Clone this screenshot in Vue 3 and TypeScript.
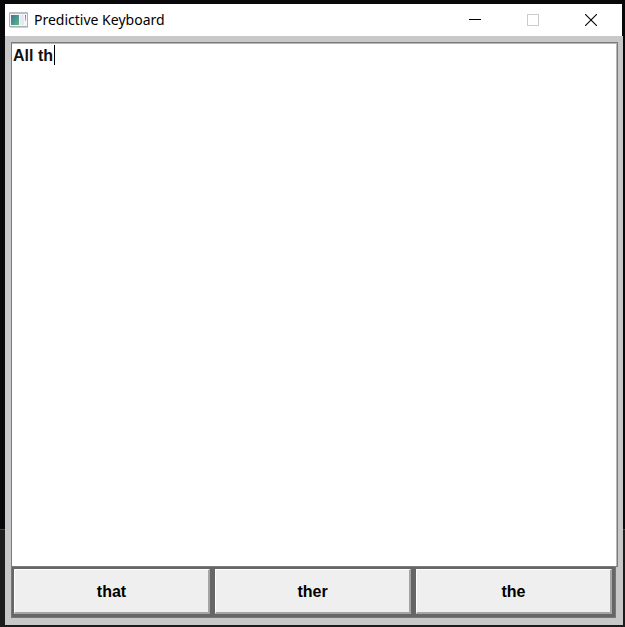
<script setup lang="ts">
import { computed, nextTick, onMounted, ref } from 'vue'

const text = ref('All th')
const editor = ref<HTMLTextAreaElement | null>(null)
const caretLeft = ref(0)
const edited = ref(false)
const suggestions = ref<string[]>(['that', 'ther', 'the'])

const caretStyle = computed(() => ({ left: `${caretLeft.value}px` }))

function placeCaret() {
  const el = editor.value
  const ctx = document.createElement('canvas').getContext('2d')
  if (!el || !ctx) return
  const style = getComputedStyle(el)
  ctx.font = `${style.fontWeight} ${style.fontSize} ${style.fontFamily}`
  caretLeft.value = Math.round(ctx.measureText(text.value).width) + 2
}

async function accept(word: string) {
  text.value = text.value.replace(/\S*$/, word + ' ')
  await nextTick()
  placeCaret()
  editor.value?.focus()
}

onMounted(placeCaret)
</script>

<template>
  <div class="desktop">
    <main class="window">
      <header class="titlebar">
        <svg class="app-icon" width="20" height="16" viewBox="0 0 20 16" aria-hidden="true">
          <defs>
            <linearGradient id="pane" x1="0" y1="0" x2="1" y2="1">
              <stop offset="0" stop-color="#456f9c" />
              <stop offset="0.5" stop-color="#4b978f" />
              <stop offset="1" stop-color="#66b57c" />
            </linearGradient>
            <linearGradient id="strip" x1="0" y1="0" x2="0" y2="1">
              <stop offset="0" stop-color="#4d86a0" />
              <stop offset="1" stop-color="#a5d3b0" />
            </linearGradient>
          </defs>
          <rect x="0.5" y="0.5" width="18" height="14" fill="#f4f6f8" stroke="#a9b0b8" />
          <path d="M0 1h19" stroke="#b9bec8" stroke-width="2" />
          <rect x="2" y="3" width="8" height="10" fill="url(#pane)" />
          <rect x="11" y="3" width="4" height="10" fill="#e6eaf0" />
          <rect x="16" y="3" width="1" height="6" fill="url(#strip)" />
          <path d="M1 15.5h18" stroke="#d0d0d0" />
        </svg>
        <h1 class="title">Predictive Keyboard</h1>
        <button class="control" type="button" aria-label="Minimize">
          <svg width="12" height="12" viewBox="0 0 12 12"><path d="M0 5.5h12" stroke="#000" /></svg>
        </button>
        <button class="control" type="button" aria-label="Maximize" disabled>
          <svg width="12" height="12" viewBox="0 0 12 12"><rect x="0.5" y="0.5" width="11" height="11" fill="none" stroke="#ccc" /></svg>
        </button>
        <button class="control" type="button" aria-label="Close">
          <svg width="12" height="12" viewBox="0 0 12 12"><path d="M0 0l12 12M12 0L0 12" stroke="#000" stroke-width="1.1" /></svg>
        </button>
      </header>

      <section class="body">
        <div class="editor">
          <textarea
            ref="editor"
            v-model="text"
            class="text"
            aria-label="Text"
            spellcheck="false"
            @input="edited = true"
            @focus="edited = true"
          ></textarea>
          <span v-if="!edited" class="caret" :style="caretStyle"></span>
        </div>
        <div class="suggestions">
          <button
            v-for="word in suggestions"
            :key="word"
            class="suggestion"
            type="button"
            @click="accept(word)"
          >{{ word }}</button>
        </div>
      </section>
    </main>
  </div>
</template>

<style>
html,
body {
  margin: 0;
  background: #0a090b;
}
</style>

<style scoped>
.desktop {
  box-sizing: border-box;
  display: flex;
  min-height: 100vh;
  padding: 4px 2px 2px 5px;
  background: linear-gradient(#08070a 0 529px, #444 529px 530px, #1c1c1c 530px);
}

.window {
  flex: 1;
  display: flex;
  flex-direction: column;
  min-width: 0;
}

.titlebar {
  display: flex;
  align-items: center;
  height: 32px;
  margin-right: 1px;
  padding: 0 2px 0 4px;
  background: #fff;
}

.app-icon {
  flex: none;
}

.title {
  flex: 1;
  margin: 0;
  padding-left: 5px;
  font: 400 14px/20px "Noto Sans", "Open Sans", sans-serif;
  color: #000;
  white-space: nowrap;
}

.control {
  display: flex;
  align-items: center;
  justify-content: center;
  width: 58px;
  height: 32px;
  padding: 0;
  border: 0;
  background: transparent;
}

.body {
  flex: 1;
  display: flex;
  flex-direction: column;
  padding: 6px 5px 7px 6px;
  background: #c8c8c8;
}

.editor {
  position: relative;
  flex: 1;
  display: flex;
  border: 1px solid #7a7a7a;
  background: #fff;
}

.text {
  flex: 1;
  box-sizing: border-box;
  min-width: 0;
  margin: 0;
  padding: 2px 1px;
  border: 1px solid #b8b8b8;
  border-width: 1px 1px 0 0;
  outline: none;
  resize: none;
  background: #fff;
  color: #111;
  font: 700 16px/20px "Liberation Sans", Arial, sans-serif;
}

.caret {
  position: absolute;
  top: 2px;
  width: 1px;
  height: 20px;
  background: #000;
}

.suggestions {
  display: grid;
  grid-template-columns: repeat(3, 1fr);
  gap: 5px;
  margin-right: 2px;
  padding: 2px 3px 3px 2px;
  border: 1px solid #777;
  border-top: 0;
  background: #666;
}

.suggestion {
  height: 45px;
  padding: 2px 0 0;
  border: 1px solid;
  border-width: 1px 2px 2px 1px;
  border-color: #fff #a5a5a5 #a5a5a5 #fff;
  background: #efefef;
  color: #000;
  font: 700 16px/20px "Liberation Sans", Arial, sans-serif;
}
</style>
